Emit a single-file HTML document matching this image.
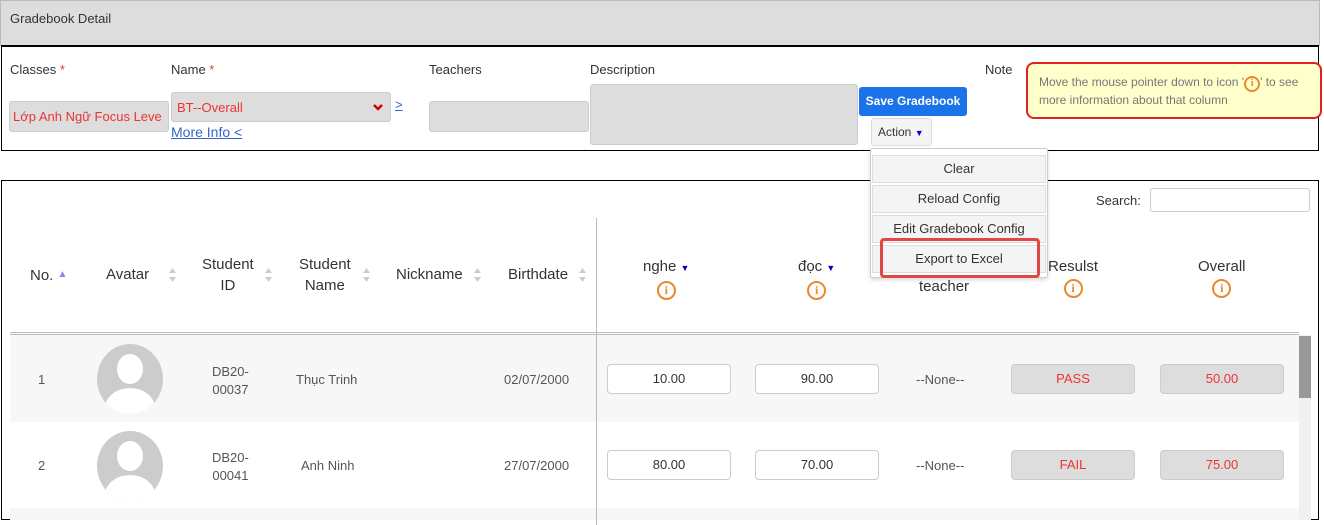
<!DOCTYPE html>
<html><head><meta charset="utf-8"><style>
body{margin:0;width:1324px;height:518px;overflow:hidden;background:#fff;font-family:"Liberation Sans","Noto Sans CJK SC",sans-serif;font-size:13px;color:#333;position:relative}
.a{position:absolute}
.inp{position:absolute;background:#ddd;border:1px solid #ccc;border-radius:3px;box-sizing:border-box}
.h{position:absolute;font-size:15px;color:#333;text-align:center;line-height:21px}
.ic{display:inline-block;width:15px;height:15px;border:2px solid #e8892b;border-radius:50%;color:#e8892b;font-size:12px;font-weight:bold;line-height:15px;text-align:center;font-family:"Liberation Serif",serif;margin-top:2px}
.tri{color:#00c;font-size:9px}
.cell{position:absolute;font-size:13px;color:#555;text-align:center}
.box{position:absolute;width:124px;height:30px;border:1px solid #ccc;border-radius:4px;box-sizing:border-box;text-align:center;line-height:28px;font-size:13px;color:#333;background:#fff}
.gb{background:#ddd;color:#e33}
.av{position:absolute;width:66px;height:70px;border-radius:50%;background:#ccc;overflow:hidden}
.av:before{content:"";position:absolute;left:20px;top:10px;width:26px;height:30px;border-radius:50%;background:#fff}
.av:after{content:"";position:absolute;left:8px;top:44px;width:50px;height:40px;border-radius:50% 50% 0 0;background:#fff}
.mi{position:absolute;left:872px;width:174px;height:28px;background:#f4f4f4;border:1px solid #ddd;box-sizing:border-box;text-align:center;line-height:26px;font-size:13px;color:#333}
.sa{position:absolute;width:7px;height:16px}
</style></head><body>
<div class="a" style="left:0;top:0;width:1320px;height:46px;background:#ddd;border:1px solid #bbb;box-sizing:border-box"></div>
<div class="a" style="left:10px;top:11px;font-size:13px">Gradebook Detail</div>
<div class="a" style="left:1px;top:45px;width:1318px;height:106px;border:1px solid #000;border-top:2px solid #000;box-sizing:border-box"></div>
<div class="a" style="left:10px;top:62px">Classes <span style="color:#e33">*</span></div>
<div class="a" style="left:171px;top:62px">Name <span style="color:#e33">*</span></div>
<div class="a" style="left:429px;top:62px">Teachers</div>
<div class="a" style="left:590px;top:62px">Description</div>
<div class="a" style="left:985px;top:62px">Note</div>
<div class="inp" style="left:9px;top:101px;width:160px;height:31px;color:#e33;line-height:30px;padding-left:3px;overflow:hidden;white-space:nowrap">Lớp Anh Ngữ Focus Leve</div>
<div class="inp" style="left:171px;top:92px;width:220px;height:30px;color:#e33;line-height:29px;padding-left:5px">BT--Overall
<svg style="position:absolute;right:7px;top:11px" width="10" height="7" viewBox="0 0 10 7"><path d="M1 1 L5 5 L9 1" stroke="#c00" stroke-width="2.4" fill="none"/></svg></div>
<div class="a" style="left:395px;top:97px;color:#36c;text-decoration:underline">&gt;</div>
<div class="a" style="left:171px;top:124px;color:#36c;text-decoration:underline;font-size:14px">More Info &lt;</div>
<div class="inp" style="left:429px;top:101px;width:160px;height:31px"></div>
<div class="inp" style="left:590px;top:84px;width:268px;height:61px"></div>
<div class="a" style="left:859px;top:87px;width:108px;height:29px;background:#1a73e8;border-radius:3px;color:#fff;font-weight:bold;font-size:12px;text-align:center;line-height:29px">Save Gradebook</div>
<div class="a" style="left:871px;top:118px;width:61px;height:28px;background:#f4f4f4;border:1px solid #ddd;border-radius:3px;box-sizing:border-box;font-size:12px;line-height:26px;padding-left:6px">Action <span class="tri">&#9660;</span></div>
<div class="a" style="left:1026px;top:62px;width:296px;height:57px;background:#ffffcc;border:2px solid #d22;border-radius:8px;box-sizing:border-box;padding:10px 0 0 11px;font-size:12px;color:#777;line-height:17px">Move the mouse pointer down to icon '<span class="ic" style="width:12px;height:12px;line-height:12px;font-size:10px;margin:0">i</span>' to see more information about that column</div>

<div class="a" style="left:1px;top:180px;width:1318px;height:340px;border:1px solid #000;box-sizing:border-box"></div>
<div class="a" style="left:1096px;top:193px">Search:</div>
<div class="a" style="left:1150px;top:188px;width:160px;height:24px;border:1px solid #ccc;border-radius:3px;box-sizing:border-box"></div>
<div class="a" style="left:596px;top:218px;width:1px;height:300px;background:#bbb"></div>
<div class="a" style="left:10px;top:332px;width:1289px;height:3px;border-top:1px solid #bbb;border-bottom:1px solid #bbb;box-sizing:border-box"></div>
<div class="h" style="left:30px;top:264px">No. <span style="color:#88e;font-size:10px;vertical-align:3px">&#9650;</span></div>
<div class="h" style="left:106px;top:264px">Avatar</div>
<svg class="sa" style="left:169px;top:267px" viewBox="0 0 7 16"><path d="M0 6 L3.5 1 L7 6Z M0 10 L3.5 15 L7 10Z" fill="#ccc"/></svg>
<div class="h" style="left:202px;top:254px">Student<br>ID</div>
<svg class="sa" style="left:265px;top:267px" viewBox="0 0 7 16"><path d="M0 6 L3.5 1 L7 6Z M0 10 L3.5 15 L7 10Z" fill="#ccc"/></svg>
<div class="h" style="left:299px;top:254px">Student<br>Name</div>
<svg class="sa" style="left:363px;top:267px" viewBox="0 0 7 16"><path d="M0 6 L3.5 1 L7 6Z M0 10 L3.5 15 L7 10Z" fill="#ccc"/></svg>
<div class="h" style="left:396px;top:264px">Nickname</div>
<svg class="sa" style="left:474px;top:267px" viewBox="0 0 7 16"><path d="M0 6 L3.5 1 L7 6Z M0 10 L3.5 15 L7 10Z" fill="#ccc"/></svg>
<div class="h" style="left:508px;top:264px">Birthdate</div>
<svg class="sa" style="left:579px;top:267px" viewBox="0 0 7 16"><path d="M0 6 L3.5 1 L7 6Z M0 10 L3.5 15 L7 10Z" fill="#ccc"/></svg>
<div class="h" style="left:643px;top:256px">nghe <span class="tri">&#9660;</span><br><span class="ic">i</span></div>
<div class="h" style="left:798px;top:256px">đọc <span class="tri">&#9660;</span><br><span class="ic">i</span></div>
<div class="h" style="left:919px;top:276px">teacher</div>
<div class="h" style="left:1048px;top:256px">Resulst<br><span class="ic">i</span></div>
<div class="h" style="left:1198px;top:256px">Overall<br><span class="ic">i</span></div>

<div class="a" style="left:10px;top:335px;width:1289px;height:87px;background:#f7f7f7"></div>
<div class="a" style="left:10px;top:508px;width:1289px;height:12px;background:#f7f7f7"></div>
<div class="a" style="left:1299px;top:335px;width:12px;height:185px;background:#f0f0f0"></div>
<div class="a" style="left:1299px;top:336px;width:12px;height:62px;background:#999"></div>
<div class="a" style="left:596px;top:335px;width:1px;height:190px;background:#bbb"></div>

<div class="cell" style="left:38px;top:372px">1</div>
<div class="av" style="left:97px;top:344px"></div>
<div class="cell" style="left:212px;top:363px;line-height:18px">DB20-<br>00037</div>
<div class="cell" style="left:296px;top:372px">Thục Trinh</div>
<div class="cell" style="left:504px;top:372px">02/07/2000</div>
<div class="box" style="left:607px;top:364px">10.00</div>
<div class="box" style="left:755px;top:364px">90.00</div>
<div class="cell" style="left:916px;top:372px">--None--</div>
<div class="box gb" style="left:1011px;top:364px">PASS</div>
<div class="box gb" style="left:1160px;top:364px">50.00</div>

<div class="cell" style="left:38px;top:458px">2</div>
<div class="av" style="left:97px;top:431px"></div>
<div class="cell" style="left:212px;top:449px;line-height:18px">DB20-<br>00041</div>
<div class="cell" style="left:301px;top:458px">Anh Ninh</div>
<div class="cell" style="left:504px;top:458px">27/07/2000</div>
<div class="box" style="left:607px;top:450px">80.00</div>
<div class="box" style="left:755px;top:450px">70.00</div>
<div class="cell" style="left:916px;top:458px">--None--</div>
<div class="box gb" style="left:1011px;top:450px">FAIL</div>
<div class="box gb" style="left:1160px;top:450px">75.00</div>

<div class="a" style="left:870px;top:148px;width:178px;height:130px;background:#fff;border:1px solid #ccc;border-radius:3px;box-sizing:border-box;box-shadow:0 2px 4px rgba(0,0,0,.15)"></div>
<div class="mi" style="top:155px">Clear</div>
<div class="mi" style="top:185px">Reload Config</div>
<div class="mi" style="top:215px">Edit Gradebook Config</div>
<div class="mi" style="top:245px">Export to Excel</div>
<div class="a" style="left:880px;top:238px;width:160px;height:40px;border:3px solid #e04848;border-radius:4px;box-sizing:border-box"></div>
</body></html>
